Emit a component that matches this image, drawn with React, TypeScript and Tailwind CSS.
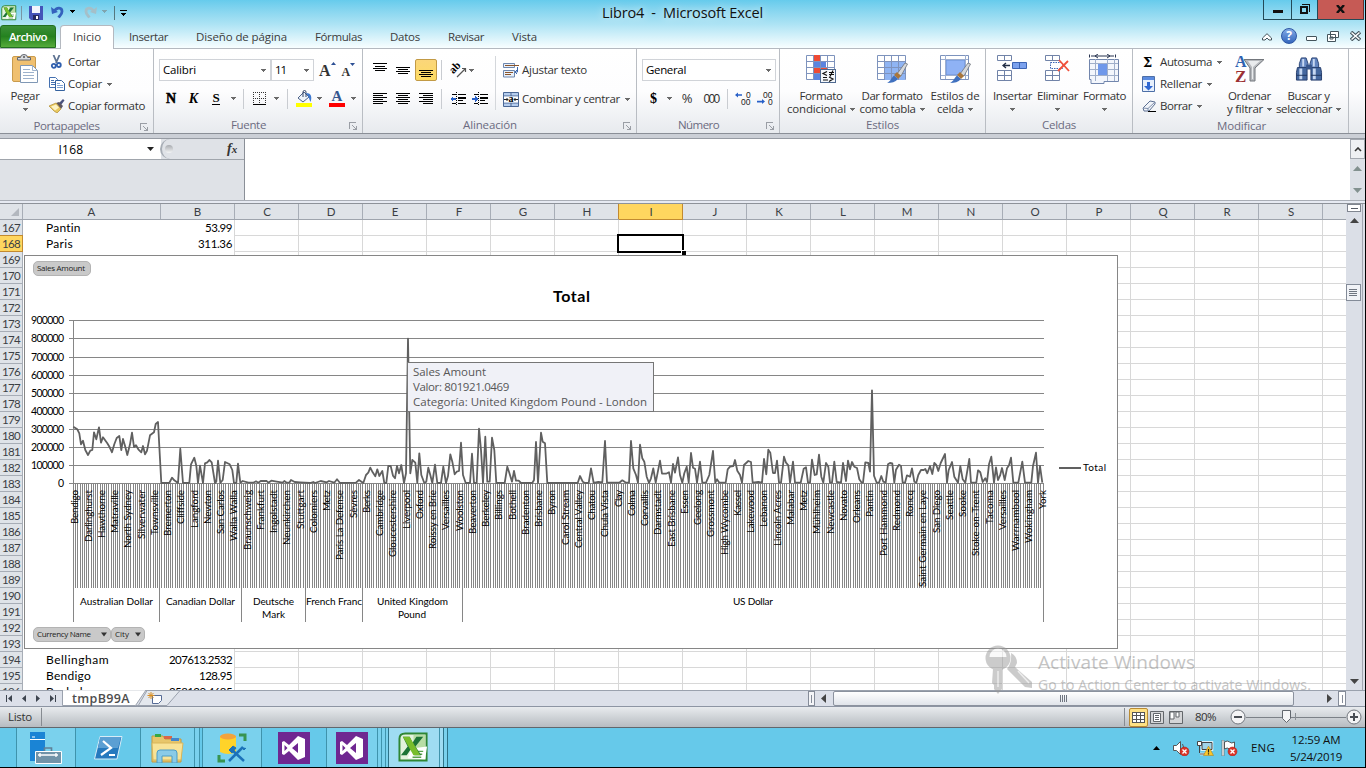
import React, { useLayoutEffect, useRef } from "react";

/* Text set to a given width by spreading its letter spacing. */
function Fit({ w, children, className = "" }: { w: number; children: string; className?: string }) {
  const ref = useRef<HTMLSpanElement>(null);
  useLayoutEffect(() => {
    const el = ref.current;
    if (!el) return;
    el.style.letterSpacing = "0px";
    const natural = el.getBoundingClientRect().width;
    el.style.letterSpacing = `${(w - natural) / children.length}px`;
  }, [w, children]);
  return (
    <span ref={ref} className={`inline-block whitespace-pre ${className}`}>
      {children}
    </span>
  );
}

const Arrow = ({ c = "text-[#6a6a6a]" }: { c?: string }) => (
  <svg className={`${c} h-[3px] w-[5px] shrink-0`} viewBox="0 0 5 3" fill="currentColor" shapeRendering="crispEdges">
    <path d="M0 0h5v1H0zM1 1h3v1H1zM2 2h1v1H2z" />
  </svg>
);

const Cell = ({ c, children }: { c: string; children?: React.ReactNode }) => (
  <div className={`flex h-full shrink-0 items-center justify-center ${c}`}>{children}</div>
);

const Sep = () => <div className="h-[20px] w-px bg-[#c9ccd1]" />;

function Group({ w, label, lw, launcher, pad = "", children }: { w: string; label: string; lw: number; launcher?: boolean; pad?: string; children: React.ReactNode }) {
  return (
    <div className={`flex h-full shrink-0 flex-col border-r border-[#b9bdc3] ${w}`}>
      <div className="flex h-[68px]">{children}</div>
      <div className="relative flex h-[17px] items-center justify-center pt-px text-[#6b6b80]">
        <Fit w={lw} className={pad}>{label}</Fit>
        {launcher && (
          <svg className="absolute right-[5px] top-[6px] h-[8px] w-[8px]" viewBox="0 0 8 8" fill="none" stroke="#9a9ea5" shapeRendering="crispEdges">
            <path d="M.5 6.500v-6h6M3 3l4 4M4 7.500h3.500V4" />
          </svg>
        )}
      </div>
    </div>
  );
}

/* ---------- ribbon icons ---------- */
const Lines = ({ d }: { d: string }) => (
  <svg className="h-[14px] w-[14px]" viewBox="0 0 14 14" stroke="#000" shapeRendering="crispEdges"><path d={d} /></svg>
);
const ClipboardIcon = () => (
  <svg className="h-[30px] w-[27px]" viewBox="0 0 27 30">
    <rect x=".5" y="2.500" width="23" height="25" rx="1.500" fill="#f0c070" stroke="#c99b4d" />
    <path d="M5.500 6V3.500h3a3.500 3 0 0 1 7 0h3V6z" fill="#d9dce0" stroke="#62666e" />
    <circle cx="12" cy="3" r="1" fill="#555" />
    <path d="M8.500 11.500h12l5 5v12h-17z" fill="#fff" stroke="#7f97b5" />
    <path d="M20.500 11.500v5h5M11 15.500h7M11 18.500h11M11 21.500h11M11 24.500h11" fill="none" stroke="#9db2cc" />
  </svg>
);
const ScissorsIcon = () => (
  <svg className="h-[14px] w-[16px]" viewBox="0 0 16 14" fill="none">
    <path d="M4.500 0l3.500 8M10.500 0L7 8" stroke="#5d7291" strokeWidth="1.800" />
    <circle cx="4.800" cy="10.800" r="2" stroke="#2f5fae" strokeWidth="1.800" />
    <circle cx="9.800" cy="10" r="2" stroke="#2f5fae" strokeWidth="1.800" />
  </svg>
);
const CopyIcon = () => (
  <svg className="h-[14px] w-[16px]" viewBox="0 0 16 14" fill="#fff" stroke="#4470b0">
    <path d="M.5.500h6l2 2v8h-8zM2 3.500h3M2 5.500h4M2 7.500h4" />
    <path d="M6.500 3.500h6l3 3v7h-9z" stroke="#35629f" />
    <path d="M8 6.500h3M8 8.500h6M8 10.500h6" stroke="#7fa3d4" />
  </svg>
);
const BrushIcon = () => (
  <svg className="h-[14px] w-[16px]" viewBox="0 0 16 14">
    <path d="M10 4l4-4 1.500 1.500L12 6z" fill="#48507c" />
    <path d="M7 4l3-1 4 4-2 3z" fill="#5c5560" />
    <path d="M0 7l7-3 5 6-4 4-3-2z" fill="#e9c95f" stroke="#b08b32" strokeWidth=".7" />
    <path d="M2 7.500l5-2 3 3-4 3z" fill="#fdf3c4" />
  </svg>
);
const BorderIcon = () => (
  <svg className="h-[14px] w-[14px]" viewBox="0 0 14 14" fill="none" shapeRendering="crispEdges">
    <path d="M0 .5h13M0 6.500h13M.5 0v12M6.500 0v12M12.500 0v12" stroke="#333" strokeDasharray="1 1" />
    <path d="M0 12.500h13" stroke="#000" />
  </svg>
);
const FillIcon = () => (
  <svg className="h-[17px] w-[17px]" viewBox="0 0 17 17">
    <path d="M2 8l6-6 5 5-6 5z" fill="#eef4fb" stroke="#4b6188" />
    <path d="M7 7V2a1.500 1.500 0 0 1 3 0v5" fill="none" stroke="#334566" />
    <path d="M10 3c6 0 6 5 4.500 9C13 9 13 7 12 6z" fill="#3d78cf" />
    <path d="M0 13h16v4H0z" fill="#ffff00" />
  </svg>
);
const OrientIcon = () => (
  <svg className="h-[16px] w-[16px] overflow-visible" viewBox="0 0 16 16">
    <text x="0" y="9" transform="rotate(-45 5 8)" fontFamily="Liberation Serif" fontWeight="700" fontSize="11">ab</text>
    <path d="M6 15l8-8M11 6.500h3.500V10" fill="none" stroke="#555" strokeWidth="1.200" />
  </svg>
);
const Indent = ({ right }: { right?: boolean }) => (
  <svg className="h-[14px] w-[17px]" viewBox="0 0 17 14" shapeRendering="crispEdges">
    <path d="M2 2.500h4M8 2.500h8M8 5.500h8M8 6.500h8M8 8.500h5M2 11.500h4M8 11.500h8" stroke="#000" />
    <path d="M6.500 0v14" stroke="#000" strokeDasharray="1 1" />
    {right ? <path d="M6 7L3 4v2H0v2h3v2z" fill="#2860c8" /> : <path d="M0 7l3-3v2h3v2H3v2z" fill="#2860c8" />}
  </svg>
);
const WrapIcon = () => (
  <svg className="h-[15px] w-[16px]" viewBox="0 0 16 15" fill="none">
    <path d="M.5.500h11v4H.5zM.5 7.500h11v6.500H.5z" fill="#e8f0fa" stroke="#6d86ad" />
    <path d="M2 2.500h14M2 9.500h8M2 11.500h6" stroke="#8a552b" strokeWidth="1.200" />
    <path d="M14.500 4v5H12M14 7l-2 2 2 2" stroke="#3b66ad" />
  </svg>
);
const MergeIcon = () => (
  <svg className="h-[15px] w-[16px]" viewBox="0 0 16 15">
    <path d="M.5.500h15v14H.5z" fill="#b5cdee" stroke="#4a6795" />
    <path d="M8 .5V4M8 11v3.500M.5 4h15M.5 11h15" stroke="#4a6795" />
    <path d="M1 4.500h14v6H1z" fill="#fff" />
    <path d="M1 7.500h4M3.500 6L5 7.500 3.500 9M15 7.500h-4M12.500 6L11 7.500 12.500 9" fill="none" stroke="#222" />
    <text x="5.500" y="10" fontFamily="Liberation Serif" fontWeight="700" fontSize="10">a</text>
  </svg>
);
const Decimals = ({ less }: { less?: boolean }) => (
  <svg className="h-[15px] w-[17px]" viewBox="0 0 17 15" fill="#222" fontFamily="Liberation Sans" fontSize="8.500" stroke="none">
    {less ? (
      <>
        <text x="6" y="7">00</text><text x="11" y="14">0</text>
        <path d="M8 10.500L5 8v1.800H0v1.600h5V13z" fill="#2860c8" />
      </>
    ) : (
      <>
        <text x="11" y="7">0</text><text x="6" y="14">00</text>
        <path d="M0 4l3-2.500v1.700h4v1.600H3v1.700z" fill="#2860c8" />
      </>
    )}
  </svg>
);
const TablePaint = ({ kind }: { kind: "cond" | "table" | "cell" }) => (
  <svg className="h-[30px] w-[31px]" viewBox="0 0 31 30">
    <path d="M.5 1.500h28v24H.5z" fill="#fff" stroke="#7d93bd" />
    {kind === "table" && <path d="M8 7h20v19H8z" fill="#8fb4f3" />}
    {kind === "cell" && <path d="M6 6h19v15H6z" fill="#8fb2f5" stroke="#6a8fd3" />}
    {kind === "cond" && (
      <>
        <path d="M8 1h6v6H8zM8 14h14v6H8z" fill="#ee4a34" />
        <path d="M8 7h12v7H8zM8 20h6v6H8z" fill="#5b84df" />
      </>
    )}
    {kind === "cell" ? (
      <path d="M5.500 1v24M25.500 1v24M1 5.500h27M1 21.500h27" stroke="#9caed0" />
    ) : (
      <path d="M7.500 1v25M14.500 1v25M21.500 1v25M1 7.500h27M1 13.500h27M1 19.500h27" stroke="#7f93bd" fill="none" />
    )}
    {kind === "cond" ? (
      <>
        <rect x="14.500" y="15.500" width="15" height="13" fill="#f5f8fc" stroke="#4f698f" />
        <path d="M21 17.500l-4 2 4 2M17 23.500h4M17 26h5M23 18.500h5M23 20.500h5M27 16.500l-3 6M23 23l4 2-4 2.500" fill="none" stroke="#111" strokeWidth="1.200" />
      </>
    ) : (
      <>
        <path d="M20 20L28 9l2.500 1L24 22z" fill="#d5d8dc" stroke="#6f747b" strokeWidth=".8" />
        <path d="M17 21l3-3 4 4-3 3z" fill="#a9763b" />
        <path d="M10 29c4-2 4-5 7-7.500l4 3.500c-3 3-6 4-11 4z" fill="#3f70bf" />
      </>
    )}
  </svg>
);
const InsertIcon = () => (
  <svg className="mt-px h-[28px] w-[31px]" viewBox="0 0 31 28">
    <path d="M.5.500h14v5H.5zM7.500.5v5M.5 15.500h14v10H.5zM7.500 15.500v10M.5 20.500h14" fill="#fff" stroke="#7183a8" />
    <path d="M15.500 7.500h14v6h-14zM22.500 7.500v6" fill="#7ca2ee" stroke="#3d65b4" />
    <path d="M13 10.500H6M9 8l-3 2.500L9 13" fill="none" stroke="#222d45" strokeWidth="1.300" />
  </svg>
);
const DeleteIcon = () => (
  <svg className="mt-px h-[28px] w-[25px]" viewBox="0 0 25 28">
    <path d="M.5.500h14v5H.5zM7.500.5v5M.5 15.500h14v10H.5zM7.500 15.500v10M.5 20.500h14" fill="#fff" stroke="#7183a8" />
    <path d="M5.500 7.500h12v6h-12z" fill="none" stroke="#3d65b4" strokeDasharray="1.500 1" />
    <path d="M14 5l10 11M23 6L13 16" stroke="#f0503b" strokeWidth="1.800" />
  </svg>
);
const FormatIcon = () => (
  <svg className="h-[30px] w-[31px]" viewBox="0 0 31 30">
    <path d="M.5.500v3M26.500.5v3M2 2h23M9 0L6 2l3 2M18 0l3 2-3 2" fill="none" stroke="#27334e" />
    <path d="M.5 5.500h29v22H15v2H2v-4H.5z" fill="#f3f6fc" stroke="#7286ad" />
    <path d="M6.500 5v22M18.500 5v22M25.500 5v22M1 9.500h28M1 21.500h28M1 15.500h28" stroke="#a0afca" />
    <path d="M9 10h9v11H9z" fill="#6f98ea" />
  </svg>
);
const SortIcon = () => (
  <svg className="h-[30px] w-[30px]" viewBox="0 0 30 30" fontFamily="Liberation Serif" fontWeight="700">
    <path d="M9 5.500h20L20 14v13h-5V14z" fill="#b6b9bd" stroke="#72767c" />
    <path d="M13 7h12l-7 6v12h-1V13z" fill="#e9ebed" />
    <text x="0" y="13" fontSize="16" fill="#2e62b0">A</text>
    <text x="0" y="27.500" fontSize="17" fill="#9b3034">Z</text>
  </svg>
);
const BinocularsIcon = () => (
  <svg className="mt-[2px] h-[27px] w-[28px]" viewBox="0 0 28 28">
    <path d="M6 2h5l2 6v5H4V8zM17 2h5l2 6v5h-9V8z" fill="#6385bf" stroke="#2a4476" />
    <path d="M2 12h10v13H1V17zM16 12h10l1 5v8H16z" fill="#45689f" stroke="#243c6c" />
    <path d="M4 13h3v11H4zM18 13h3v11h-3zM7 3h2v8H7zM18 3h2v8h-2z" fill="#c7d8f2" />
    <path d="M11 9h6v5h-6z" fill="#38568c" />
    <path d="M1 20h11M16 20h11" stroke="#20365f" />
  </svg>
);
const FillDown = () => (
  <svg className="h-[16px] w-[13px]" viewBox="0 0 13 16"><path d="M.5.500h12v15H.5z" fill="#e8f0fc" stroke="#4d6fa7" /><path d="M1 1h11v3H1z" fill="#5b8be0" /><path d="M5 6h3v4h3l-4.500 4.500L2 10h3z" fill="#2f67d2" /></svg>
);
const Eraser = () => (
  <svg className="h-[12px] w-[15px]" viewBox="0 0 15 12"><path d="M1 8l7-7 5 1v2L7 11H2z" fill="#f1f4f9" stroke="#5c6f92" /><path d="M1 8l5 .5L13 2M6 8.500V11" fill="none" stroke="#7d8eac" /><path d="M6 11.500h8" stroke="#000" /></svg>
);

const Small = ({ icon, text, w, arrow }: { icon: React.ReactNode; text: string; w: number; arrow?: boolean }) => (
  <div className="flex h-[22px] items-center">
    <div className="flex w-[19px] items-center">{icon}</div>
    <Fit w={w}>{text}</Fit>
    {arrow && <div className="ml-[5px]"><Arrow /></div>}
  </div>
);

const Big = ({ c, icon, l1, w1, l2, w2 }: { c: string; icon: React.ReactNode; l1: string; w1: number; l2?: string; w2?: number }) => (
  <div className={`flex shrink-0 flex-col items-center pt-[5px] ${c}`}>
    <div className="flex h-[35px] items-start">{icon}</div>
    <div className="flex h-[14px] items-center"><Fit w={w1}>{l1}</Fit></div>
    <div className="flex h-[12px] items-center gap-[4px]">
      {l2 && w2 ? <Fit w={w2}>{l2}</Fit> : null}
      <Arrow />
    </div>
  </div>
);

const ExcelMark = ({ c }: { c: string }) => (
  <svg className={c} viewBox="0 0 32 32">
    <path d="M1.500 7q0-5.500 6-5.500h22v28h-28z" fill="#e3f2dd" stroke="#2e8634" strokeWidth="2" />
    <path d="M16 3h12v24H16z" fill="#b8dda5" />
    <path d="M14 17l16-2-2 13-18-1z" fill="#fff" />
    <path d="M17 20h9M16 23h9M15 26h9" stroke="#5ba24c" strokeWidth="1.500" />
    <path d="M5 5h7l3 6 4-6h7l-8 10 6 9h-7l-4-6-4 6H3l7-9z" fill="#1d7436" />
    <path d="M5 5h7l11 19h-7z" fill="#78bd2b" />
  </svg>
);

function TitleArea() {
  const tabs: [string, number, string][] = [
    ["Insertar", 39, "ml-[15px]"], ["Diseño de página", 91, "ml-[28px]"], ["Fórmulas", 47, "ml-[28px]"],
    ["Datos", 30, "ml-[28px]"], ["Revisar", 36, "ml-[28px]"], ["Vista", 25, "ml-[28px]"],
  ];
  return (
    <div className="flex h-[48px] flex-col bg-gradient-to-b from-[#66cbec] via-[#ace3f4] to-[#f8feff]">
      <div className="relative flex h-[25px] items-center">
        <ExcelMark c="ml-px h-[16px] w-[16px]" />
        <div className="ml-[4px] h-[14px] w-px bg-[#7896a4]" />
        <svg className="ml-[7px] h-[14px] w-[14px]" viewBox="0 0 14 14"><path d="M0 0h14v14H2l-2-2z" fill="#4454b8" /><path d="M3 0h8v7H3z" fill="#f1f5fc" /><path d="M4 9h6v5H4z" fill="#252b5f" /><path d="M7 10h2v3H7z" fill="#fff" /></svg>
        <svg className="-mt-px ml-[8px] h-[13px] w-[14px]" viewBox="0 0 14 13"><path d="M3 5.500c3-5 8-4 8 0 0 3-2 4-3.500 6" fill="none" stroke="#3461bd" strokeWidth="2.800" /><path d="M0 1l1 7 6-2z" fill="#3461bd" /></svg>
        <div className="-mt-[3px] ml-[5px]"><Arrow c="text-black" /></div>
        <svg className="-mt-px ml-[8px] h-[13px] w-[14px]" viewBox="0 0 14 13"><path d="M11 5.500C8 .5 3 1.500 3 5.500c0 3 2 4 3.500 6" fill="none" stroke="#a5bfc8" strokeWidth="2.800" /><path d="M14 1l-1 7-6-2z" fill="#a5bfc8" /></svg>
        <div className="-mt-[3px] ml-[5px]"><Arrow c="text-[#7fa5b0]" /></div>
        <div className="ml-[7px] h-[14px] w-px bg-[#55777f]" />
        <div className="ml-[5px] flex flex-col items-center gap-[2px]"><div className="h-px w-[7px] bg-black" /><Arrow c="text-black" /></div>
        <div className="ml-[475px] text-[14.500px] text-[#111] [text-shadow:0_0_8px_white]"><Fit w={161}>Libro4  -  Microsoft Excel</Fit></div>
        <div className="ml-auto mr-px flex h-[20px] self-start border-b border-l border-[#224a58]">
          <div className="flex w-[28px] items-center justify-center border-r border-[#224a58] pt-[4px]"><div className="h-[3px] w-[10px] bg-[#111]" /></div>
          <div className="flex w-[26px] items-center justify-center border-r border-[#224a58] pb-px">
            <svg className="h-[10px] w-[10px]" viewBox="0 0 10 10" fill="none" stroke="#111" shapeRendering="crispEdges"><path d="M1 3h6v6H1z" strokeWidth="2" /><path d="M2 .5h7.500V8" /></svg>
          </div>
          <div className="flex w-[46px] items-center justify-center border-r border-[#6d2a28] bg-[#c65a55] pb-px">
            <svg className="h-[8px] w-[9px]" viewBox="0 0 9 8"><path d="M1 0l7 8M8 0L1 8" stroke="#111" strokeWidth="2.400" /></svg>
          </div>
        </div>
      </div>
      <div className="flex h-[23px]">
        <div className="flex w-[56px] items-center justify-center rounded-t-[3px] border border-[#22701f] bg-gradient-to-b from-[#3b8f37] via-[#24821f] to-[#55ac3b] font-semibold text-white"><Fit w={38}>Archivo</Fit></div>
        <div className="relative z-10 -mb-px ml-[4px] flex w-[54px] items-center justify-center rounded-t-[4px] border border-b-0 border-[#b4b9c0] bg-white pb-px text-[#444]"><Fit w={28}>Inicio</Fit></div>
        {tabs.map(([t, w, m]) => <div key={t} className={`flex items-center text-[#3c3c3c] ${m}`}><Fit w={w}>{t}</Fit></div>)}
        <div className="ml-auto mr-[4px] flex items-center">
          <svg className="h-[8px] w-[10px]" viewBox="0 0 10 8" fill="#fff" stroke="#44545c"><path d="M5 .7L9.500 5v2H7L5 5 3 7H.5V5z" /></svg>
          <div className="-mt-px ml-[9px] flex h-[16px] w-[16px] items-center justify-center rounded-full border border-[#2d56a4] bg-gradient-to-b from-[#82aae5] to-[#3567bd] text-[12px] font-bold text-white">?</div>
          <div className="ml-[9px] mt-[3px] h-[5px] w-[11px] rounded-[1px] border border-[#44545c] bg-white" />
          <svg className="ml-[10px] h-[11px] w-[12px]" viewBox="0 0 12 11" fill="#fff" stroke="#44545c"><path d="M3.500.500h8v6h-8zM.5 3.500h8v7h-8zM3 6h3v2H3z" /></svg>
          <svg className="-mt-px ml-[11px] h-[10px] w-[11px]" viewBox="0 0 11 10"><path d="M1 1l9 8M10 1L1 9" stroke="#44545c" strokeWidth="3.600" /><path d="M1.500 1.500l8 7M9.500 1.500l-8 7" stroke="#fff" strokeWidth="1.500" /></svg>
        </div>
      </div>
    </div>
  );
}

const Combo = ({ c, t, w }: { c: string; t: string; w: number }) => (
  <div className={`flex h-[22px] shrink-0 items-center border border-[#d0d3d8] bg-white pl-[3px] pr-[4px] text-black ${c}`}>
    <Fit w={w}>{t}</Fit><div className="ml-auto"><Arrow /></div>
  </div>
);

function Ribbon() {
  return (
    <div className="flex h-[86px] border-b border-t border-b-[#8a8f97] border-t-[#b4b9c0] bg-gradient-to-b from-white via-[#fdfdfe] to-[#e7eaee] text-[#333]">
      <Group w="w-[154px]" label="Portapapeles" lw={66} launcher pad="mr-[20px]">
        <Big c="ml-[8px] w-[34px]" icon={<ClipboardIcon />} l1="Pegar" w1={29} />
        <div className="ml-[7px] mt-[2px] flex flex-col">
          <Small icon={<ScissorsIcon />} text="Cortar" w={32} />
          <Small icon={<CopyIcon />} text="Copiar" w={34} arrow />
          <Small icon={<BrushIcon />} text="Copiar formato" w={77} />
        </div>
      </Group>
      <Group w="w-[209px]" label="Fuente" lw={35} launcher pad="mr-[19px]">
        <div className="flex flex-col">
          <div className="mt-[10px] flex h-[22px] items-center pl-[5px]">
            <Combo c="w-[112px]" t="Calibri" w={33} />
            <Combo c="w-[43px]" t="11" w={11} />
            <div className="ml-[5px] flex items-start pt-[2px] font-['Liberation_Serif'] text-[16px] font-bold text-[#333]">A<svg className="mt-[3px] h-[3px] w-[5px]" viewBox="0 0 5 3"><path d="M0 3L2.500 0 5 3z" fill="#2c4f94" /></svg></div>
            <div className="ml-[6px] flex items-start pt-[4px] font-['Liberation_Serif'] text-[12px] font-bold text-[#333]">A<svg className="h-[3px] w-[5px]" viewBox="0 0 5 3"><path d="M0 0h5L2.500 3z" fill="#2c4f94" /></svg></div>
          </div>
          <div className="mt-[6px] flex h-[23px] items-center pl-[6px] font-['Liberation_Serif'] text-[14px] font-bold text-black">
            <Cell c="w-[22px]"><span className="[-webkit-text-stroke:.5px]">N</span></Cell>
            <Cell c="w-[23px] italic">K</Cell>
            <Cell c="w-[22px]"><span className="border-b border-black text-[13px] leading-[12px]">S</span></Cell>
            <Cell c="w-[12px]"><Arrow /></Cell>
            <Cell c="w-[8px]"><Sep /></Cell>
            <Cell c="w-[25px]"><BorderIcon /></Cell>
            <Cell c="w-[9px]"><Arrow /></Cell>
            <Cell c="w-[12px]"><Sep /></Cell>
            <Cell c="w-[22px]"><FillIcon /></Cell>
            <Cell c="w-[9px]"><Arrow /></Cell>
            <Cell c="w-[26px]"><div className="flex w-[16px] flex-col items-center border-b-4 border-[#f00] text-[15px] leading-[13px] text-[#35568f]">A</div></Cell>
            <Cell c="w-[7px]"><Arrow /></Cell>
          </div>
        </div>
      </Group>
      <Group w="w-[274px]" label="Alineación" lw={54} launcher pad="mr-[19px]">
        <div className="flex w-[132px] flex-col pl-[6px]">
          <div className="mt-[10px] flex h-[22px] items-center">
            <Cell c="w-[22px]"><Lines d="M0 .5h14M2 3.500h10M0 5.500h14M2 7.500h10" /></Cell>
            <Cell c="w-[24px]"><Lines d="M0 4.500h14M2 6.500h10M0 8.500h14M2 10.500h10" /></Cell>
            <Cell c="w-[22px] rounded-[2px] border border-[#c29a45] bg-gradient-to-b from-[#fbd67a] to-[#fddb62]"><Lines d="M0 7.500h14M2 9.500h10M0 11.500h14M2 13.500h10" /></Cell>
            <Cell c="w-[8px]"><Sep /></Cell>
            <Cell c="ml-[6px] w-[16px]"><OrientIcon /></Cell>
            <Cell c="w-[8px]"><Arrow /></Cell>
          </div>
          <div className="mt-[6px] flex h-[23px] items-center">
            <Cell c="w-[22px]"><Lines d="M0 1.500h14M0 3.500h10M0 5.500h14M0 7.500h10M0 9.500h14M0 11.500h10" /></Cell>
            <Cell c="w-[24px]"><Lines d="M0 1.500h14M2 3.500h10M0 5.500h14M2 7.500h10M0 9.500h14M2 11.500h10" /></Cell>
            <Cell c="w-[22px]"><Lines d="M0 1.500h14M4 3.500h10M0 5.500h14M4 7.500h10M0 9.500h14M4 11.500h10" /></Cell>
            <Cell c="w-[8px]"><Sep /></Cell>
            <Cell c="ml-[5px] w-[17px]"><Indent /></Cell>
            <Cell c="ml-[5px] w-[17px]"><Indent right /></Cell>
          </div>
        </div>
        <div className="mt-[7px] h-[54px] w-px bg-[#d4d7db]" />
        <div className="ml-[7px] mt-[10px] flex flex-col gap-[7px]">
          <Small icon={<WrapIcon />} text="Ajustar texto" w={65} />
          <Small icon={<MergeIcon />} text="Combinar y centrar" w={98} arrow />
        </div>
      </Group>
      <Group w="w-[143px]" label="Número" lw={41} launcher pad="mr-[19px]">
        <div className="flex flex-col">
          <div className="mt-[10px] pl-[5px]"><Combo c="w-[134px]" t="General" w={40} /></div>
          <div className="mt-[6px] flex h-[23px] items-center pl-[6px]">
            <Cell c="w-[21px] font-['Liberation_Serif'] text-[14px] font-bold text-black">$</Cell>
            <Cell c="w-[11px]"><Arrow /></Cell>
            <Cell c="w-[24px] text-[13px]">%</Cell>
            <Cell c="w-[24px] font-['Liberation_Sans'] text-[12px]"><Fit w={15}>000</Fit></Cell>
            <Cell c="w-[8px]"><Sep /></Cell>
            <Cell c="ml-[4px] w-[17px]"><Decimals /></Cell>
            <Cell c="ml-[5px] w-[17px]"><Decimals less /></Cell>
          </div>
        </div>
      </Group>
      <Group w="w-[206px]" label="Estilos" lw={33}>
        <Big c="ml-[5px] w-[72px]" icon={<TablePaint kind="cond" />} l1="Formato" w1={43} l2="condicional" w2={59} />
        <Big c="w-[70px]" icon={<TablePaint kind="table" />} l1="Dar formato" w1={61} l2="como tabla" w2={56} />
        <Big c="w-[56px]" icon={<TablePaint kind="cell" />} l1="Estilos de" w1={49} l2="celda" w2={27} />
      </Group>
      <Group w="w-[147px]" label="Celdas" lw={34}>
        <Big c="ml-[4px] w-[45px]" icon={<InsertIcon />} l1="Insertar" w1={39} />
        <Big c="w-[45px]" icon={<DeleteIcon />} l1="Eliminar" w1={41} />
        <Big c="w-[49px]" icon={<FormatIcon />} l1="Formato" w1={43} />
      </Group>
      <Group w="w-[216px]" label="Modificar" lw={49} pad="ml-[2px]">
        <div className="ml-[9px] mt-[2px] flex w-[82px] flex-col">
          <div className="flex h-[22px] items-center"><div className="w-[18px] pl-px font-['DejaVu_Serif'] text-[13px] font-bold leading-none text-black">Σ</div><Fit w={52}>Autosuma</Fit><div className="ml-[5px]"><Arrow /></div></div>
          <div className="flex h-[22px] items-center"><div className="w-[18px]"><FillDown /></div><Fit w={42}>Rellenar</Fit><div className="ml-[5px]"><Arrow /></div></div>
          <div className="flex h-[22px] items-center"><div className="w-[18px]"><Eraser /></div><Fit w={32}>Borrar</Fit><div className="ml-[5px]"><Arrow /></div></div>
        </div>
        <Big c="w-[51px]" icon={<SortIcon />} l1="Ordenar" w1={43} l2="y filtrar" w2={36} />
        <Big c="w-[67px]" icon={<BinocularsIcon />} l1="Buscar y" w1={42} l2="seleccionar" w2={56} />
      </Group>
    </div>
  );
}

function FormulaBar() {
  return (
    <div className="flex h-[61px]">
      <div className="flex w-[245px] flex-col border-r border-[#8a8f97] bg-[#dfe2e7]">
        <div className="flex h-[21px] items-center border-b border-[#a0a5ac]">
          <div className="flex h-full w-[161px] items-center bg-white text-black"><div className="w-[142px] pt-px text-center text-[12px]"><Fit w={25}>I168</Fit></div><svg className="ml-[5px] h-[4px] w-[7px]" viewBox="0 0 7 4"><path d="M0 0h7L3.500 4z" fill="#222" /></svg></div>
          <div className="-ml-px flex h-full w-[16px] items-center rounded-l-[10px] border-l-2 border-[#a7adb5] bg-[#dfe2e7] pl-[3px]"><div className="h-[8px] w-[8px] rounded-full bg-gradient-to-b from-[#a8abb0] to-[#f4f5f6]" /></div>
          <div className="ml-[51px] font-['Liberation_Serif'] text-[14px] font-bold italic leading-[18px] text-[#333]">f<span className="text-[11px]">x</span></div>
        </div>
      </div>
      <div className="flex-1 bg-white" />
      <div className="flex w-[15px] flex-col items-center bg-[#dce0e6]">
        <div className="flex h-[20px] w-full items-center justify-center border border-[#a3a8b0] bg-[#eef0f3]"><svg className="h-[5px] w-[8px]" viewBox="0 0 8 5" fill="none" stroke="#333" strokeWidth="1.600"><path d="M1 4l3-3 3 3" /></svg></div>
        <svg className="mt-[7px] h-[5px] w-[9px]" viewBox="0 0 9 5" fill="#82918f"><path d="M0 5L4.500 0 9 5z" /></svg>
        <svg className="mt-[17px] h-[5px] w-[9px]" viewBox="0 0 9 5" fill="#82918f"><path d="M0 0h9L4.500 5z" /></svg>
      </div>
    </div>
  );
}

/* ---------- chart ---------- */
const part1 = "220,680 232,688 238,700 243,733 249,722 256,750 264,765 271,752 277,750 282,697 289,718 297,682 303,728 309,712 322,730 329,742 336,757 343,733 350,714 358,708 364,750 369,717 375,737 382,765 390,733 396,698 402,741 408,736 415,748 424,757 429,738 435,763 441,752 450,706 462,697 467,672 474,666 484,849 508,849 516,833 523,841 534,849 541,746 549,849 568,849 573,793 583,773 589,797 594,849 600,797 609,849 615,790 622,787 628,780 635,787 645,849 649,845 654,782 661,849 668,840 675,786 689,793 697,810 702,849 709,849 714,791 721,848 728,843 745,848 760,848 768,844 775,848 782,843 800,843 805,848 814,842 830,845 848,848 853,843 860,848 868,848 873,840 884,846 900,847 930,849 940,846 945,849 962,843 980,847 987,843 1003,848 1011,838 1020,849 1068,848 1077,840";
const part2 = "0,512 10,519 18,495 25,488 31,473 38,487 46,499 52,478 58,498 67,483 73,519 79,519 85,468 92,468 99,497 105,505 111,468 117,490 124,465 132,519 138,490 144,86 151,490 157,450 166,458 172,519 178,430 184,495 193,519 199,515 205,473 211,495 217,519 225,464 232,519 243,519 250,470 258,519 264,498 271,433 277,455 284,493 290,485 297,483 303,398 309,495 317,519 330,519 336,431 342,519 350,519 357,356 363,420 369,519 376,380 382,515 389,515 396,383 403,420 409,519 434,519 442,470 448,488 456,515 462,483 468,512 476,512 483,519 517,519 522,510 528,396 534,519 543,368 548,395 555,400 562,519 653,519 660,498 668,515 675,519 686,519 693,475 701,519 715,516 727,517 735,393 741,518 778,518 787,511 796,517 807,518 813,393 820,475 828,495 834,518 840,404 847,445 853,455 860,500 867,519 873,505 880,475 887,518 900,452 906,491 918,491 927,487 933,518 939,462 945,488 954,442 960,495 967,518 973,490 980,470 986,518 993,429 999,473 1005,476 1011,518 1020,455 1027,518 1038,518 1048,495 1059,423 1066,518 1071,508 1078,518 1097,518 1103,478";
const part3 = "90,470 100,468 105,450 112,482 120,495 126,518 132,465 145,453 153,456 158,518 175,516 186,518 192,447 199,493 205,419 211,428 219,489 225,489 231,452 237,518 243,518 252,440 258,458 265,466 270,518 279,455 285,518 302,518 311,476 318,472 324,518 330,518 336,449 344,495 350,493 357,434 364,500 370,518 378,459 385,470 390,518 396,518 403,455 410,516 423,518 429,459 438,513 444,452 450,478 456,456 463,470 471,474 478,508 485,518 489,518 496,457 505,459 510,485 516,241 522,497 530,518 537,518 544,498 550,515 557,518 564,463 570,459 577,460 583,518 588,479 597,464 603,468 608,518 615,518 621,496 630,500 636,475 643,515 649,518 655,495 663,480 671,480 676,477 682,490 690,468 697,492 703,459 709,465 715,483 722,459 735,432 741,518 746,480 756,456 763,500 774,518 781,468 788,508 796,518 808,447 813,518 829,518 834,481 841,487 848,516 856,505 861,516 867,463 874,440 882,518 888,472 894,510 900,497 906,474 914,510 921,475 927,466 933,443 940,518 955,518 967,455 975,518 994,518 999,468 1008,428 1014,518 1020,468 1027,518";
const place = (s: string, ox: number, oy: number) =>
  s.split(" ").map((p) => { const [x, y] = p.split(",").map(Number); return `${(ox + x / 3).toFixed(1)},${(oy + y / 3).toFixed(1)}`; }).join(" ");
const series = [place(part1, 0, 200), place(part2, 360, 310), place(part3, 700, 310)].join(" ");

const cities = "Bendigo:34,Darlinghurst:52,Hawthorne:48,Matraville:43,North Sydney:58,Silverwater:49,Townsville:45,Bremerton:46,Cliffside:34,Langford:38,Newton:34,San Carlos:44,Walla Walla:51,Braunschweig:60,Frankfurt:40,Ingolstadt:43,Neunkirchen:55,Stuttgart:39,Colomiers:43,Metz:21,Paris La Defense:70,Sèvres:28,Berks:23,Cambridge:46,Gloucestershire:67,Liverpool:39,Oxford:29,Roissy en Brie:59,Versailles:40,Woolston:41,Beaverton:44,Berkeley:37,Billings:30,Bothell:30,Bradenton:45,Brisbane:37,Byron:25,Carol Stream:55,Central Valley:58,Chatou:30,Chula Vista:47,Clay:17,Colma:26,Corvallis:36,Darmstadt:45,East Brisbane:57,Essen:24,Geelong:35,Grossmont:47,High Wycombe:65,Kassel:26,Lakewood:43,Lebanon:37,Lincoln Acres:56,Malabar:35,Metz:21,Mühlheim:44,Newcastle:44,Novato:31,Orleans:33,Pantin:27,Port Hammond:66,Redmond:41,Roncq:27,Saint Germain en Laye:97,San Diego:43,Seattle:30,Sooke:27,Stoke-on-Trent:66,Tacoma:34,Versailles:40,Warrnambool:61,Wokingham:53,York:19"
  .split(",").map((s) => s.split(":") as [string, string]);
const gridY = [320, 338, 357, 375, 393, 411, 429, 447, 465, 483];
const ticks = Array.from({ length: 440 }, (_, i) => `M${Math.round(73 + i * 2.2085) + 0.5} 484v104`).join("");
const groupText: [string, number, number, number][] = [
  ["Australian Dollar", 116.5, 605, 73], ["Canadian Dollar", 200.5, 605, 69], ["Deutsche", 273.5, 605, 41], ["Mark", 273.5, 618, 23],
  ["French Franc", 334, 605, 56], ["United Kingdom", 412.5, 605, 71], ["Pound", 412, 618, 28], ["US Dollar", 753, 605, 40],
];
const Chip = ({ x, y, w, t, tw, arrow }: { x: number; y: number; w: number; t: string; tw: number; arrow?: boolean }) => (
  <g>
    <rect x={x + 0.5} y={y + 0.5} width={w - 1} height="14" rx="4.500" fill="#c9c9c9" stroke="#b3b3b3" />
    <text x={x + 4} y={y + 10} fontSize="8" textLength={tw} fill="#222" fontFamily="Open Sans">{t}</text>
    {arrow && <path d={`M${x + w - 10} ${y + 5.5}h6l-3 4z`} fill="#333" />}
  </g>
);

function Chart() {
  return (
    <svg className="h-[394px] w-[1094px]" viewBox="24 255 1094 394" fontFamily="Lato, 'Open Sans', sans-serif" fontSize="10">
      <rect x="24.500" y="255.500" width="1093" height="393" fill="#fff" stroke="#868686" />
      <g stroke="#868686" shapeRendering="crispEdges" fill="none">
        {gridY.map((y) => <path key={y} d={`M69 ${y + 0.5}H1043.500`} />)}
        <path d={ticks} />
        <path d="M73.500 320V622M159.500 483V622M241.500 483V622M305.500 483V622M362.500 483V622M462.500 483V622M1043.500 483V622" />
      </g>
      {gridY.map((y, i) => {
        const t = i === 9 ? "0" : `${9 - i}00000`;
        return <text key={y} x={64} y={y + 4} textAnchor="end" textLength={i === 9 ? 6 : 33} fontSize="10.500">{t}</text>;
      })}
      <text x="571.500" y="301.500" textAnchor="middle" fontWeight="700" fontSize="16" textLength="37">Total</text>
      <polyline points={series} fill="none" stroke="#606060" strokeWidth="1.800" strokeLinejoin="round" />
      {cities.map(([name, len], i) => (
        <text key={i} transform={`translate(${(78.4 + i * 13.25).toFixed(1)} ${490 + Number(len)}) rotate(-90)`} textLength={len} fontSize="9.800">{name}</text>
      ))}
      {groupText.map(([t, x, y, w]) => <text key={t} x={x} y={y} textAnchor="middle" textLength={w}>{t}</text>)}
      <path d="M1059 468h22" stroke="#606060" strokeWidth="2" />
      <text x="1083" y="471" textLength="23">Total</text>
      <Chip x={33} y={261} w={58} t="Sales Amount" tw={48} />
      <Chip x={33} y={627} w={78} t="Currency Name" tw={54} arrow />
      <Chip x={111} y={627} w={34} t="City" tw={14} arrow />
    </svg>
  );
}

/* ---------- worksheet ---------- */
const letters = "CDEFGHIJKLMNOPQRS".split("");
const content: Record<number, [string, number, string, number]> = {
  167: ["Pantin", 35, "53.99", 27], 168: ["Paris", 27, "311.36", 34],
  194: ["Bellingham", 63, "207613.2532", 63], 195: ["Bendigo", 45, "128.95", 33], 196: ["Berkeley", 51, "258120.4685", 63],
};

function Sheet() {
  return (
    <div className="relative flex h-[486px] w-[1346px] flex-col overflow-hidden bg-white font-['Lato'] text-[12px] text-[#3b3f45]">
      <div className="flex h-[16px] shrink-0 border-b border-[#9ea4ad] bg-[#dfe3e8] text-[11.500px] leading-[16px]">
        <div className="flex w-[23px] items-end justify-end border-r border-[#a7adb6] p-[3px]"><svg className="h-[8px] w-[8px]" viewBox="0 0 8 8"><path d="M8 0v8H0z" fill="#b3b8bf" /></svg></div>
        <div className="w-[138px] border-r border-[#a7adb6] text-center">A</div>
        <div className="w-[74px] border-r border-[#a7adb6] text-center">B</div>
        {letters.map((l) => <div key={l} className={`w-[64px] border-r pl-px text-center ${l === "I" ? "border-[#c28a30] bg-[#ffd65f] shadow-[-1px_0_#c28a30,0_1px_#c28a30]" : "border-[#a7adb6]"}`}>{l}</div>)}
      </div>
      {Array.from({ length: 30 }, (_, i) => 167 + i).map((r) => (
        <div key={r} className="flex h-[16px] shrink-0 leading-[16.500px]">
          <div className={`w-[23px] border-b border-r pl-[2px] text-[11.500px] ${r === 168 ? "border-[#c28a30] bg-[#ffd65f] shadow-[0_-1px_#c28a30]" : "border-[#a7adb6] bg-[#dfe3e8]"}`}><Fit w={18}>{String(r)}</Fit></div>
          <div className="flex w-[212px] justify-between border-r border-[#d8d8d8] pl-[23px] pr-[2px] text-black">
            {content[r] && <><Fit w={content[r][1]}>{content[r][0]}</Fit><Fit w={content[r][3]} className="text-[11.500px]">{content[r][2]}</Fit></>}
          </div>
          {letters.map((l) => <div key={l} className="w-[64px] border-b border-r border-[#d8d8d8]" />)}
          <div className="flex-1 border-b border-[#d8d8d8]" />
        </div>
      ))}
      <div className="absolute left-[617px] top-[30px] h-[19px] w-[67px] border-2 border-black bg-white"><div className="absolute -bottom-[4px] -right-[4px] h-[5px] w-[5px] border-l border-t border-white bg-black" /></div>
      <div className="absolute left-[24px] top-[51px]"><Chart /></div>
      <div className="absolute left-[407px] top-[158px] flex h-[50px] w-[247px] flex-col border border-[#767676] bg-[#f0f1f7] pl-[5px] pt-px font-['Open_Sans'] text-[11.500px] leading-[15px] text-[#575757]">
        <div><Fit w={73}>Sales Amount</Fit></div>
        <div><Fit w={96}>Valor: 801921.0469</Fit></div>
        <div><Fit w={234}>Categoría: United Kingdom Pound - London</Fit></div>
      </div>
    </div>
  );
}

function VScroll() {
  return (
    <div className="flex w-[19px] flex-col bg-[#dbdfe7]">
      <div className="flex h-full w-[17px] flex-col items-center border-r border-[#a3a8b2]">
        <div className="flex h-[8px] w-[14px] items-center justify-center border border-[#7f858f] bg-white"><div className="h-px w-[7px] bg-[#555b66]" /></div>
        <svg className="mt-[6px] h-[5px] w-[9px]" viewBox="0 0 9 5" fill="#444"><path d="M0 5L4.500 0 9 5z" /></svg>
        <div className="mr-[2px] mt-[61px] flex h-[17px] w-[15px] flex-col items-center justify-center gap-px border border-[#838b98] bg-[#f1f3f7]">
          {[0, 1, 2, 3].map((i) => <div key={i} className="h-px w-[8px] bg-[#6f7681]" />)}
        </div>
        <svg className="mb-[6px] mt-auto h-[5px] w-[9px]" viewBox="0 0 9 5" fill="#444"><path d="M0 0h9L4.500 5z" /></svg>
      </div>
    </div>
  );
}

function TabBar() {
  return (
    <div className="flex h-[17px] border-b border-t border-b-[#8d95a3] border-t-[#9aa1ad] bg-[#dce0e9]">
      <svg className="h-[15px] w-[62px]" viewBox="0 0 62 15" fill="#3d444f"><path d="M6 4h1v7H6zM12 4v7L8 7.500zM26 4v7l-4-3.500zM36 4v7l4-3.500zM50 4v7l4-3.500zM55 4h1v7h-1z" /></svg>
      <div className="relative flex w-[76px]">
        <svg className="absolute -top-px left-0 h-[17px] w-[120px]" viewBox="0 0 120 17"><path d="M76 16L85 .500h33L105 15.500H73z" fill="#e4e8ee" stroke="#9aa1ad" /><path d="M.5 0v15.500h73L84 0z" fill="#fff" stroke="#9aa1ad" /><path d="M1 0h82" stroke="#fff" /><path d="M90.500 5.500h9v5l-3 3h-6z" fill="#fff" stroke="#556b96" /><path d="M89 2v7M85.500 5.500h7M86.500 3l5 5M91.500 3l-5 5" stroke="#d98f23" /></svg>
        <div className="relative pl-[10px] text-[12.500px] font-semibold leading-[15px] text-[#4d4d4d]"><Fit w={58}>tmpB99A</Fit></div>
      </div>
      <div className="ml-[670px] flex w-[7px] items-center justify-center border border-[#858c99] bg-[#f4f5f8]"><div className="h-[8px] w-px bg-[#858c99]" /></div>
      <svg className="ml-[6px] mt-[3px] h-[9px] w-[5px]" viewBox="0 0 5 9" fill="#444"><path d="M5 0v9L0 4.500z" /></svg>
      <div className="ml-[7px] flex w-[461px] items-center justify-center gap-px rounded-[2px] border border-[#8b929e] bg-gradient-to-b from-white to-[#e0e4ea]">
        {[0, 1, 2, 3].map((i) => <div key={i} className="h-[7px] w-px bg-[#6f7681]" />)}
      </div>
      <svg className="ml-[33px] mt-[3px] h-[9px] w-[5px]" viewBox="0 0 5 9" fill="#444"><path d="M0 0v9l5-4.500z" /></svg>
      <div className="ml-[6px] flex w-[8px] items-center justify-center border border-[#858c99] bg-white"><div className="h-[8px] w-px bg-[#858c99]" /></div>
    </div>
  );
}

const Zoomer = ({ plus }: { plus?: boolean }) => (
  <svg className="h-[16px] w-[16px] shrink-0" viewBox="0 0 16 16" fill="none"><circle cx="8" cy="8" r="7" fill="#f4f4f5" stroke="#72777e" /><path d={plus ? "M4 8h8M8 4v8" : "M4 8h8"} stroke="#4b4f55" strokeWidth="2" /></svg>
);

function StatusBar() {
  return (
    <div className="flex h-[21px] items-center border-b border-[#61676d] bg-gradient-to-b from-[#e8ebee] to-[#b7bcc1] text-[#333]">
      <Fit w={24} className="ml-[8px]">Listo</Fit>
      <div className="ml-[9px] h-[18px] w-px bg-[#868b91]" />
      <div className="ml-auto h-[18px] w-px bg-[#868b91]" />
      <div className="ml-[4px] flex h-[19px] w-[19px] items-center justify-center rounded-[2px] border border-[#b98b34] bg-[#ffe184]">
        <svg className="h-[11px] w-[13px]" viewBox="0 0 13 11" fill="#fff" stroke="#555" shapeRendering="crispEdges"><path d="M.5.500h12v10H.5zM4.500 0v11M8.500 0v11M0 3.500h13M0 7.500h13" /></svg>
      </div>
      <svg className="ml-[2px] h-[13px] w-[14px]" viewBox="0 0 14 13" fill="#d4d5d7" stroke="#63676b"><path d="M.5.500h13v12H.5z" /><path d="M3.500 2.500h7v8h-7zM5 4.500h4M5 6.500h4M5 8.500h4" fill="#fff" /></svg>
      <svg className="ml-[5px] h-[13px] w-[14px]" viewBox="0 0 14 13" fill="#d4d5d7" stroke="#63676b"><path d="M.5.500h13v12H.5z" /><path d="M1 1h4v7H1zM7 1h3v5H7z" fill="#fff" /></svg>
      <Fit w={21} className="ml-[12px]">80%</Fit>
      <div className="ml-[14px]"><Zoomer /></div>
      <div className="relative flex h-full w-[100px] items-center"><div className="h-px w-full bg-[#7c8187]" />
        <svg className="absolute left-[36px] top-[3px] h-[13px] w-[16px]" viewBox="0 0 16 13"><path d="M.5.500h8v8l-4 4-4-4z" fill="#f5f5f6" stroke="#62676e" /><path d="M13.500 3v7" stroke="#8a8f95" /></svg>
      </div>
      <div className="mr-[3px]"><Zoomer plus /></div>
    </div>
  );
}

const VS = () => (
  <svg className="h-[32px] w-[32px]" viewBox="0 0 32 32"><path d="M0 0h32v32H0z" fill="#6f2791" /><path d="M20 4l7 3v18l-7 3-9-9-5 4-2-1V10l2-1 5 4zM20 11l-6 5 6 5zM6.500 13v6l3-3z" fill="#fff" fillRule="evenodd" /></svg>
);
const RedX = () => <g><circle cx="11.500" cy="11.500" r="4.500" fill="#dc3327" stroke="#a51e16" strokeWidth=".5" /><path d="M9.500 9.500l4 4M13.500 9.500l-4 4" stroke="#fff" strokeWidth="1.400" /></g>;

function TaskBar() {
  return (
    <div className="flex h-[39px] bg-[#66c9ea] text-[#101010]">
      <Cell c="w-[17px] border-r border-[#3f93ac]" />
      <Cell c="w-[59px] border-r border-[#3f93ac] bg-[#7ad1ed]">
        <svg className="h-[32px] w-[32px]" viewBox="0 0 32 32"><path d="M0 0h15v29H0z" fill="#1a84d5" /><path d="M0 7.500h15" stroke="#fff" /><path d="M2 5h3" stroke="#fff" /><path d="M14.500 19v-3h7v3" fill="none" stroke="#5f8097" strokeWidth="1.600" /><path d="M5.500 19.500h26v12h-26z" fill="#7193a8" stroke="#fff" /><path d="M8 23h20M10 21v4M26 21v4" stroke="#fff" strokeWidth="1.300" /></svg>
      </Cell>
      <Cell c="w-[65px] border-r border-[#3f93ac]">
        <svg className="h-[24px] w-[29px]" viewBox="0 0 29 24"><path d="M6 .5h22L23 23H.500z" fill="#2579be" stroke="#d7ecf7" /><path d="M6 1h21l-3 11H4z" fill="#5b9fd3" /><path d="M9 5l8 7-10 7M15 19h6" fill="none" stroke="#fff" strokeWidth="2.200" /></svg>
      </Cell>
      <Cell c="w-[54px] border-r border-[#3f93ac] bg-[#7ad1ed]">
        <svg className="h-[30px] w-[33px]" viewBox="0 0 33 30"><path d="M1 3h11l2 3h16v23H1z" fill="#e7c66b" stroke="#c3983e" /><path d="M4 1h6v3H4z" fill="#36a845" /><path d="M13 3h8v3h-8z" fill="#d96747" /><path d="M20 5h8v3h-8z" fill="#4286cc" /><path d="M1 10h31l-2 17H2z" fill="#f8e397" stroke="#d9b65b" /><path d="M6 30v-10q0-3 3-3h14q3 0 3 3v10h-5v-7H11v7z" fill="#8acbe8" stroke="#4c9cc6" /></svg>
      </Cell>
      <Cell c="w-[5px] border-r border-[#3f93ac] bg-[#7ad1ed]" />
      <Cell c="w-[3px] border-r border-[#3f93ac]" />
      <Cell c="w-[59px] border-r border-[#3f93ac] bg-[#7ad1ed]">
        <svg className="h-[30px] w-[30px]" viewBox="0 0 30 30"><path d="M3 3h16v16q-8 4-16 0z" fill="#ffd329" /><ellipse cx="11" cy="3.500" rx="8" ry="3" fill="#f2a33c" /><path d="M22 2h6v6M2 22v6h6" fill="none" stroke="#379451" strokeWidth="3" /><path d="M14 16l13 12M26 14L12 28" stroke="#1c72b9" strokeWidth="2.500" /><path d="M12 17l4-4 3 2-4 5zM24 14l3 3 2-2" fill="#1c72b9" stroke="#1c72b9" /></svg>
      </Cell>
      <Cell c="w-[65px] border-r border-[#3f93ac]"><VS /></Cell>
      <Cell c="w-[51px] border-r border-[#3f93ac] bg-[#7ad1ed]"><VS /></Cell>
      <Cell c="w-[4px] border-r border-[#3f93ac] bg-[#7ad1ed]" />
      <Cell c="w-[4px] border-r border-[#3f93ac] bg-[#7ad1ed]" />
      <Cell c="w-[3px] border-r border-[#2d7389] bg-[#7ad1ed]" />
      <Cell c="w-[51px] border-r border-[#3f93ac] bg-[#9fdcf2] pb-px pr-[2px]"><ExcelMark c="h-[31px] w-[31px]" /></Cell>
      <Cell c="w-[4px] border-r border-[#2d7389] bg-[#9fdcf2]" />
      <Cell c="w-[4px] border-r border-[#2d7389] bg-[#7ad1ed]" />
      <div className="ml-auto flex items-center">
        <svg className="h-[4px] w-[7px]" viewBox="0 0 7 4"><path d="M0 4L3.500 0 7 4z" /></svg>
        <svg className="ml-[13px] h-[16px] w-[17px]" viewBox="0 0 17 16"><path d="M.5 5.500h3l4-4v13l-4-4h-3z" fill="#fff" stroke="#555" /><path d="M9.500 4q2 3 0 6" fill="none" stroke="#555" /><RedX /></svg>
        <svg className="ml-[7px] h-[16px] w-[17px]" viewBox="0 0 17 16"><path d="M5 2.500h10v7H5zM3 14h8" fill="#9fd4e8" stroke="#fff" strokeWidth="2.500" /><path d="M5 2.500h10v7H5zM3 14h8" fill="#9fd4e8" stroke="#444" /><path d="M.5 1.500h4v4h-4zM2.500 6v7" fill="#fff" stroke="#444" /><path d="M11.500 6l5 9.500h-10z" fill="#fbc62b" stroke="#a97a10" strokeWidth=".5" /><path d="M11.500 9v3.500M11.500 13.200v1.200" stroke="#222" strokeWidth="1.200" /></svg>
        <svg className="ml-[7px] h-[16px] w-[17px]" viewBox="0 0 17 16"><path d="M1 0h2v16H1z" fill="#fff" stroke="#555" strokeWidth=".6" /><path d="M3.500 2q3-2 5 0t5 0v7q-3 2-5 0t-5 0z" fill="#fff" stroke="#555" /><RedX /></svg>
        <Fit w={24} className="ml-[13px]">ENG</Fit>
        <div className="ml-[14px] mr-[22px] flex w-[54px] flex-col items-center leading-[17px]"><Fit w={49}>12:59 AM</Fit><Fit w={52}>5/24/2019</Fit></div>
      </div>
    </div>
  );
}

export default function App() {
  return (
    <div className="relative h-[768px] w-[1366px] overflow-hidden border-b border-r border-black bg-[#dfe3e8] font-['Open_Sans','Noto_Sans',sans-serif] text-[11.500px]">
      <TitleArea />
      <Ribbon />
      <div className="h-[5px] border-b border-[#969ba3] bg-[#cbcfd6]" />
      <FormulaBar />
      <div className="h-[4px] border-y border-b-[#8d9299] border-t-[#a9aeb6] bg-[#e6eaf2]" />
      <div className="flex h-[486px]"><Sheet /><VScroll /></div>
      <TabBar />
      <StatusBar />
      <TaskBar />
      <div className="pointer-events-none absolute left-[985px] top-[645px] flex text-[#8a8a8a] opacity-50">
        <svg className="h-[50px] w-[48px]" viewBox="0 0 48 50">
          <path d="M26 8q6 3 6 10l-2 4 17 15v6l-7-1-18-18q5-6 4-16z" fill="#999" />
          <path d="M33 26l11 12" stroke="#ddd" strokeWidth="1.500" />
          <circle cx="13" cy="13" r="12.500" fill="#999" />
          <path d="M4.500 12a8.500 8.500 0 0 1 17 0z" fill="#f4f4f4" />
          <path d="M8 24h9v20l-4 5-4-5v-4l-2-2z" fill="#999" />
          <path d="M13 26v16" stroke="#ddd" strokeWidth="1.500" />
        </svg>
        <div className="ml-[5px] flex flex-col">
          <span className="mt-[3px] text-[19px] leading-[28px]"><Fit w={157}>Activate Windows</Fit></span>
          <span className="text-[14px] leading-[18px]"><Fit w={273}>Go to Action Center to activate Windows.</Fit></span>
        </div>
      </div>
    </div>
  );
}
